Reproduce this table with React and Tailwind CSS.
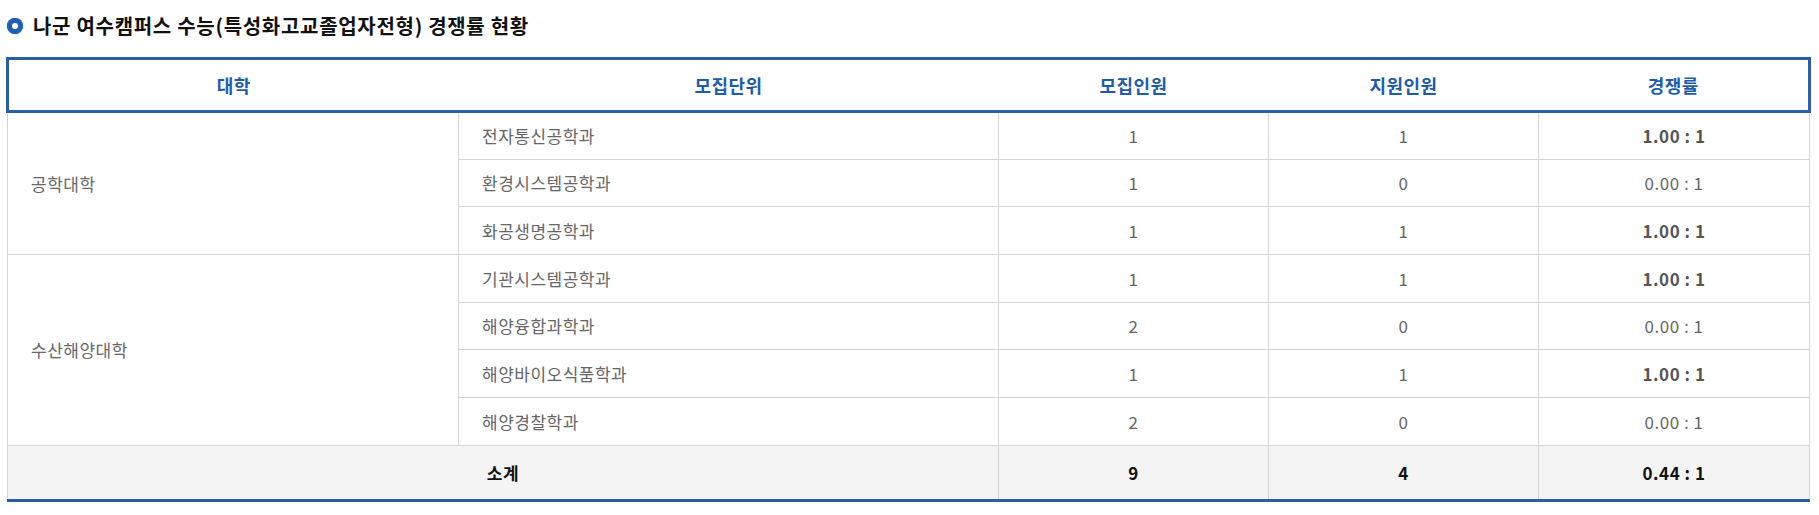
import React from "react";

const rows = [
  { college: "공학대학", span: 3, dept: "전자통신공학과", quota: 1, applied: 1, ratio: "1.00 : 1" },
  { dept: "환경시스템공학과", quota: 1, applied: 0, ratio: "0.00 : 1" },
  { dept: "화공생명공학과", quota: 1, applied: 1, ratio: "1.00 : 1" },
  { college: "수산해양대학", span: 4, dept: "기관시스템공학과", quota: 1, applied: 1, ratio: "1.00 : 1" },
  { dept: "해양융합과학과", quota: 2, applied: 0, ratio: "0.00 : 1" },
  { dept: "해양바이오식품학과", quota: 1, applied: 1, ratio: "1.00 : 1" },
  { dept: "해양경찰학과", quota: 2, applied: 0, ratio: "0.00 : 1" },
];

const font = { fontFamily: "'Noto Sans CJK KR', 'Noto Sans', sans-serif" };

const App = () => {
  return (
    <div className="bg-white w-[1819px] h-[515px] overflow-hidden" style={font}>
      {/* title */}
      <div className="flex items-center h-[46px] pl-[7px] pt-[5px]">
        <span className="w-[16px] h-[16px] rounded-full border-[5px] border-[#2160b0] bg-white shadow-[0_0_1px_#2160b0]"></span>
        <h2 className="ml-[10px] text-[20px] font-bold text-[#111] tracking-[0.7px]">
          나군 여수캠퍼스 수능(특성화고교졸업자전형) 경쟁률 현황
        </h2>
      </div>

      <div className="mt-[11px] ml-[6px]">
        <table className="w-[1802px] table-fixed border-collapse text-[17px] tracking-[0.5px]">
          <colgroup>
            <col className="w-[451px]" />
            <col className="w-[540px]" />
            <col className="w-[270px]" />
            <col className="w-[270px]" />
            <col className="w-[271px]" />
          </colgroup>
          <thead>
            <tr className="h-[53px]">
              <th className="border-y-[3px] border-l-[3px] border-[#2a5ea6] text-[#1f5ca8] text-[18px] font-bold">대학</th>
              <th className="border-y-[3px] border-[#2a5ea6] text-[#1f5ca8] text-[18px] font-bold">모집단위</th>
              <th className="border-y-[3px] border-[#2a5ea6] text-[#1f5ca8] text-[18px] font-bold">모집인원</th>
              <th className="border-y-[3px] border-[#2a5ea6] text-[#1f5ca8] text-[18px] font-bold">지원인원</th>
              <th className="border-y-[3px] border-r-[3px] border-[#2a5ea6] text-[#1f5ca8] text-[18px] font-bold">경쟁률</th>
            </tr>
          </thead>
          <tbody className="text-[#666]">
            {rows.map((r, i) => (
              <tr key={i} className="h-[47.7px]">
                {r.college && (
                  <td rowSpan={r.span} className="border border-[#d5d5d5] pl-[23px] text-left">
                    {r.college}
                  </td>
                )}
                <td className="border border-[#d5d5d5] pl-[23px] text-left">{r.dept}</td>
                <td className="border border-[#d5d5d5] text-center">{r.quota}</td>
                <td className="border border-[#d5d5d5] text-center">{r.applied}</td>
                <td
                  className={
                    r.ratio === "0.00 : 1"
                      ? "border border-[#d5d5d5] text-center"
                      : "border border-[#d5d5d5] text-center font-bold text-[#555]"
                  }
                >
                  {r.ratio}
                </td>
              </tr>
            ))}
          </tbody>
          <tfoot>
            <tr className="h-[55px] bg-[#f4f4f4] text-[#111] font-bold">
              <td colSpan={2} className="border border-b-[3px] border-[#d5d5d5] border-b-[#2a5ea6] text-center">
                소계
              </td>
              <td className="border border-b-[3px] border-[#d5d5d5] border-b-[#2a5ea6] text-center">9</td>
              <td className="border border-b-[3px] border-[#d5d5d5] border-b-[#2a5ea6] text-center">4</td>
              <td className="border border-b-[3px] border-[#d5d5d5] border-b-[#2a5ea6] text-center">0.44 : 1</td>
            </tr>
          </tfoot>
        </table>
      </div>
    </div>
  );
};

export default App;
